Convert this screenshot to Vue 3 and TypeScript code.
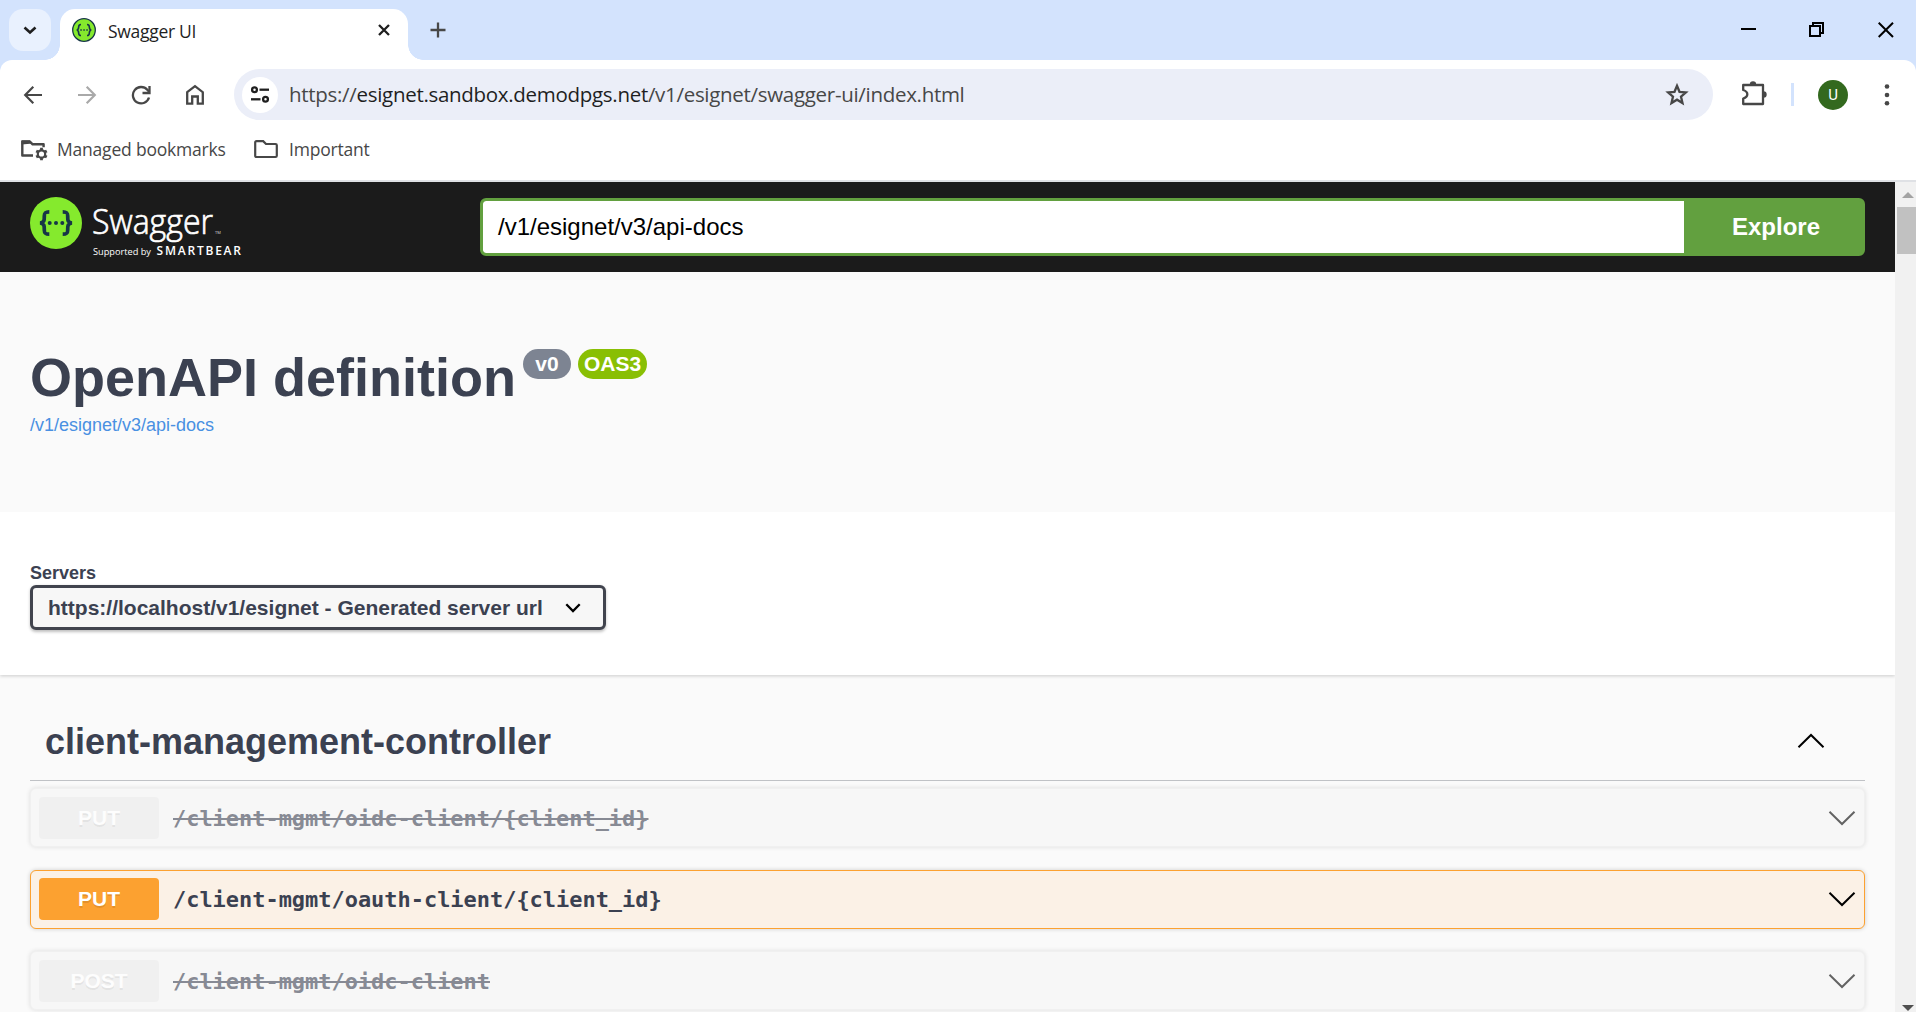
<script setup lang="ts">
interface Operation {
  method: string
  path: string
  deprecated: boolean
}

const operations: Operation[] = [
  { method: 'PUT', path: '/client-mgmt/oidc-client/{client_id}', deprecated: true },
  { method: 'PUT', path: '/client-mgmt/oauth-client/{client_id}', deprecated: false },
  { method: 'POST', path: '/client-mgmt/oidc-client', deprecated: true },
]
</script>

<template>
  <div class="window">
    <header class="tabstrip">
      <div class="tab-search">
        <svg width="42" height="42" viewBox="0 0 42 42"><path d="M15.500 18.500l5.500 5 5.500-5" fill="none" stroke="#1f1f1f" stroke-width="2.600" /></svg>
      </div>
      <div class="tab">
        <svg class="favicon" width="24" height="24" viewBox="0 0 24 24">
          <circle cx="12" cy="12" r="11.300" fill="#85ea2d" stroke="#173647" stroke-width="1.300" />
          <g fill="none" stroke="#173647" stroke-width="1.600">
            <path d="M9 6.500c-2 0-2.300.6-2.300 2.300 0 2-.2 2.800-1.900 3.200 1.700.4 1.900 1.200 1.900 3.200 0 1.700.3 2.300 2.300 2.300" />
            <path d="M15 6.500c2 0 2.300.6 2.300 2.300 0 2 .2 2.800 1.900 3.200-1.700.4-1.900 1.200-1.900 3.200 0 1.700-.3 2.300-2.300 2.300" />
          </g>
          <path d="M8.300 12h1.500M11.300 12h1.500M14.300 12h1.500" stroke="#173647" stroke-width="1.500" />
        </svg>
        <span class="tab-title">Swagger UI</span>
        <svg class="tab-close" width="12" height="12" viewBox="0 0 12 12"><path d="M1 1l10 10M11 1L1 11" stroke="#1f1f1f" stroke-width="2.300" /></svg>
      </div>
      <svg class="new-tab" width="16" height="16" viewBox="0 0 16 16"><path d="M8 .5v15M.5 8h15" stroke="#474747" stroke-width="2.300" /></svg>
      <div class="window-controls">
        <svg width="16" height="16" viewBox="0 0 16 16"><path d="M0 7h15" stroke="#000" stroke-width="2" /></svg>
        <svg width="16" height="16" viewBox="0 0 16 16" fill="none" stroke="#000" stroke-width="2"><path d="M1 4h10v10H1z" /><path d="M4 4V1h10v10h-3" /></svg>
        <svg width="16" height="16" viewBox="0 0 16 16"><path d="M.7.7l14.300 14.300M15 .7L.7 15" stroke="#000" stroke-width="2" /></svg>
      </div>
    </header>

    <div class="toolbar">
      <svg class="nav-icon" width="20" height="20" viewBox="0 0 20 20" fill="none" stroke="#474747" stroke-width="2.200"><path d="M19 10H2.500M10.300 1.800L2.200 10l8.100 8.200" /></svg>
      <svg class="nav-icon" width="20" height="20" viewBox="0 0 20 20" fill="none" stroke="#a9a9a9" stroke-width="2.200"><path d="M1 10h16.500M9.700 1.800l8.100 8.200-8.100 8.200" /></svg>
      <svg class="nav-icon" width="20" height="20" viewBox="0 0 20 20" fill="none" stroke="#474747" stroke-width="2.300"><path d="M18 12.500A8.200 8.200 0 1 1 16.300 4.800L18.300 7" /><path d="M18.500 1v7h-7" /></svg>
      <svg class="nav-icon" width="20" height="22" viewBox="0 0 20 22" fill="none" stroke="#474747" stroke-width="2.300"><path d="M2.200 8.200L10 2.200l7.800 6v11.500h-5v-7.200H7.200v7.200h-5z" /></svg>
      <div class="omnibox">
        <span class="site-info">
          <svg width="18" height="18" viewBox="0 0 18 18" fill="none" stroke="#1f1f1f" stroke-width="2.300"><circle cx="3.500" cy="3.700" r="2.400" /><path d="M8.500 3.700H18" /><circle cx="14.500" cy="13.300" r="2.400" /><path d="M0 13.300h9.500" /></svg>
        </span>
        <span class="url">https://<b>esignet.sandbox.demodpgs.net</b>/v1/esignet/swagger-ui/index.html</span>
        <svg class="star" width="24" height="23" viewBox="0 0 24 23"><path d="M12 2.800l2.500 6 6.400.6-4.900 4.200 1.500 6.400L12 16.700 6.500 20 8 13.600 3.100 9.400l6.400-.6z" fill="none" stroke="#474747" stroke-width="2.300" /></svg>
      </div>
      <svg class="puzzle" width="25" height="25" viewBox="0 0 25 25"><path d="M2.500 4h18.500v19H1.200v-5.500c5.500-1.800 5.500-6.700 0-8.500V4z" fill="none" stroke="#474747" stroke-width="2.300" stroke-linejoin="round" /><path d="M7.800 3.500a3.200 3.200 0 0 1 6.400 0zM21.500 10.300a3.200 3.200 0 0 1 0 6.400z" fill="#474747" /></svg>
      <span class="divider"></span>
      <span class="avatar">U</span>
      <svg class="kebab" width="6" height="24" viewBox="0 0 6 24" fill="#474747"><circle cx="3" cy="3.500" r="2.300" /><circle cx="3" cy="12" r="2.300" /><circle cx="3" cy="20.300" r="2.300" /></svg>
    </div>

    <div class="bookmarks">
      <svg width="28" height="24" viewBox="0 0 28 24">
        <path d="M13 18.500H2.300V4.500h7.500l2.800 2.800h11v3" fill="none" stroke="#474747" stroke-width="2.400" stroke-linejoin="round" />
        <path d="M1.500 7.500V3.500h8.500l3 3z" fill="#474747" />
        <circle cx="21.500" cy="17" r="3.700" fill="none" stroke="#474747" stroke-width="2.200" />
        <path d="M21.500 10.800v2.500M21.500 20.700v2.500M16.200 13.900l2.200 1.200M24.600 18.900l2.200 1.200M16.200 20.100l2.200-1.200M24.600 15.100l2.200-1.200" stroke="#474747" stroke-width="2.800" />
      </svg>
      <span class="bm-managed">Managed bookmarks</span>
      <svg class="bm-folder" width="24" height="20" viewBox="0 0 24 20"><path d="M2.500 2.200h6.700l2.800 2.800h9.500q1.300 0 1.300 1.300v10.400q0 1.300-1.300 1.300h-19q-1.300 0-1.300-1.300V3.500q0-1.300 1.300-1.300z" fill="none" stroke="#474747" stroke-width="2.200" /></svg>
      <span class="bm-important">Important</span>
    </div>

    <div class="viewport">
      <main class="page">
        <div class="topbar">
          <svg class="logo" width="215" height="62" viewBox="0 0 215 62">
            <circle cx="26" cy="26" r="26" fill="#85ea2d" />
            <g fill="none" stroke="#173647" stroke-width="3.700">
              <path d="M19.300 14.800c-4.300 0-5 1-5 4.200 0 4.200.2 6-4 7 4.200 1 4 2.800 4 7 0 3.200.7 4.200 5 4.200" />
              <path d="M32.700 14.800c4.300 0 5 1 5 4.200 0 4.200-.2 6 4 7-4.200 1-4 2.800-4 7 0 3.200-.7 4.200-5 4.200" />
            </g>
            <g fill="#173647"><circle cx="19.700" cy="26" r="2" /><circle cx="26" cy="26" r="2" /><circle cx="32.300" cy="26" r="2" /></g>
            <text class="logo-name" x="62" y="36.500" textLength="121" lengthAdjust="spacingAndGlyphs">Swagger</text>
            <text class="logo-tm" x="185" y="36.500">TM</text>
            <text class="logo-by" x="63" y="58" textLength="58" lengthAdjust="spacingAndGlyphs">Supported by</text>
            <text class="logo-bear" x="126.500" y="57.500" textLength="84.500">SMARTBEAR</text>
          </svg>
          <div class="download">
            <div class="spec-url">/v1/esignet/v3/api-docs</div>
            <div class="explore">Explore</div>
          </div>
        </div>

        <section class="info">
          <div class="title-row">
            <h1>OpenAPI definition</h1>
            <span class="badge">v0</span>
            <span class="badge oas">OAS3</span>
          </div>
          <a class="spec-link">/v1/esignet/v3/api-docs</a>
        </section>

        <section class="servers">
          <label>Servers</label>
          <div class="select">
            <span>https://localhost/v1/esignet - Generated server url</span>
            <svg width="16" height="10" viewBox="0 0 16 10"><path d="M1.300 1.200L8 8l6.700-6.800" fill="none" stroke="#000" stroke-width="2.300" /></svg>
          </div>
        </section>

        <section class="operations">
          <div class="tag">
            <h3>client-management-controller</h3>
            <svg width="28" height="16" viewBox="0 0 28 16"><path d="M1.500 14.300L14 2l12.500 12.300" fill="none" stroke="#000" stroke-width="2" /></svg>
          </div>
          <div v-for="op in operations" :key="op.method + op.path" class="opblock" :class="{ deprecated: op.deprecated }">
            <span class="method">{{ op.method }}</span>
            <span class="path">{{ op.path }}</span>
            <svg width="28" height="16" viewBox="0 0 28 16"><path d="M1.500 1.700L14 14 26.500 1.700" fill="none" stroke="#000" stroke-width="2" /></svg>
          </div>
        </section>
      </main>
      <aside class="scrollbar">
        <svg width="12" height="6" viewBox="0 0 12 6"><path d="M0 6L6 0l6 6z" fill="#a3a3a3" /></svg>
        <div class="thumb"></div>
        <svg class="down" width="12" height="6" viewBox="0 0 12 6"><path d="M0 0l6 6 6-6z" fill="#505050" /></svg>
      </aside>
    </div>
  </div>
</template>

<style>
body {
  margin: 0;
  overflow: hidden;
}
</style>

<style scoped>
* {
  box-sizing: border-box;
}
svg {
  display: block;
  flex: none;
}
.window {
  width: 1916px;
  height: 1012px;
  display: flex;
  flex-direction: column;
  overflow: hidden;
  background: #d3e3fd;
  font-family: "Open Sans", "Noto Sans", sans-serif;
}
.tabstrip {
  height: 60px;
  flex: none;
  display: flex;
  align-items: flex-start;
  padding-left: 9px;
}
.tab-search {
  width: 42px;
  height: 42px;
  margin-top: 9px;
  border-radius: 14px;
  background: #e9f1fe;
}
.tab {
  position: relative;
  width: 348px;
  height: 51px;
  margin: 9px 0 0 9px;
  padding: 0 18px 0 12px;
  display: flex;
  border-radius: 15px 15px 0 0;
  background: #fff;
}
.tab::before,
.tab::after {
  content: "";
  position: absolute;
  bottom: 0;
  width: 15px;
  height: 15px;
}
.tab::before {
  right: 100%;
  background: radial-gradient(circle at 0 0, transparent 14.500px, #fff 15px);
}
.tab::after {
  left: 100%;
  background: radial-gradient(circle at 100% 0, transparent 14.500px, #fff 15px);
}
.favicon {
  margin-top: 9px;
}
.tab-title {
  margin: 9px 0 0 12px;
  font-size: 17.500px;
  line-height: 27px;
  color: #1f1f1f;
  letter-spacing: -0.3px;
}
.tab-close {
  margin: 15px 0 0 auto;
}
.new-tab {
  margin: 22px 0 0 22px;
}
.window-controls {
  display: flex;
  gap: 52.500px;
  margin: 22px 22px 0 auto;
}
.window-controls svg:nth-child(2) {
  margin: 0 1px 0 -1px;
}
.toolbar {
  height: 69px;
  flex: none;
  display: flex;
  align-items: center;
  padding: 0 26px 0 23px;
  border-radius: 12px 12px 0 0;
  background: #fff;
}
.nav-icon {
  margin-right: 34px;
}
.nav-icon + .nav-icon:nth-child(4) {
  margin-right: 29px;
}
.omnibox {
  width: 1479px;
  height: 51px;
  display: flex;
  align-items: center;
  padding: 0 24px 0 8px;
  border-radius: 26px;
  background: #ebeef8;
}
.site-info {
  width: 36px;
  height: 36px;
  display: flex;
  align-items: center;
  justify-content: center;
  border-radius: 50%;
  background: #fff;
}
.url {
  margin: -2px 0 0 11px;
  font-size: 20.500px;
  color: #474747;
  letter-spacing: -0.3px;
}
.url b {
  font-weight: inherit;
  color: #1f1f1f;
}
.star {
  margin-left: auto;
}
.puzzle {
  margin: -3px 0 0 29px;
}
.divider {
  width: 3px;
  height: 23px;
  margin-left: 24px;
  background: #d3e3fd;
}
.avatar {
  width: 30px;
  height: 30px;
  margin-left: 24px;
  border-radius: 50%;
  background: #33691e;
  color: #fff;
  font: 15px/30px Roboto, sans-serif;
  text-align: center;
}
.kebab {
  margin-left: auto;
}
.bookmarks {
  height: 53px;
  flex: none;
  display: flex;
  align-items: center;
  padding: 0 0 11px 20px;
  border-bottom: 2px solid #dfe1e5;
  background: #fff;
  font-size: 17.500px;
  color: #474747;
  letter-spacing: -0.2px;
}
.bm-managed {
  width: 168px;
  margin-left: 9px;
  white-space: nowrap;
}
.bm-folder {
  margin-left: 29px;
}
.bm-important {
  margin-left: 11px;
}
.viewport {
  flex: 1;
  display: flex;
  min-height: 0;
}
.page {
  width: 1895px;
  overflow: hidden;
  background: #fafafa;
  color: #3b4151;
  font-family: "Liberation Sans", Arial, sans-serif;
}
.topbar {
  height: 90px;
  display: flex;
  padding: 15px 30px 0;
  background: #1b1b1b;
}
.logo-name,
.logo-by {
  font-family: "Open Sans", sans-serif;
  fill: #fff;
}
.logo-name {
  font-size: 34px;
  font-weight: 300;
  stroke: #fff;
  stroke-width: 0.7px;
}
.logo-tm {
  font: 4px "Open Sans", sans-serif;
  fill: #ddd;
}
.logo-by {
  font-size: 9.500px;
}
.logo-bear {
  font: 600 12px "Open Sans", sans-serif;
  fill: #fff;
}
.download {
  width: 1385px;
  height: 58px;
  margin: 1px 0 0 auto;
  display: flex;
  border: 3px solid #62a03f;
  border-radius: 6px;
  background: #62a03f;
  overflow: hidden;
}
.spec-url {
  width: 1201px;
  padding-left: 15px;
  border-radius: 3px 0 0 3px;
  background: #fff;
  color: #000;
  font-size: 24px;
  line-height: 52px;
}
.explore {
  flex: 1;
  padding-left: 6px;
  color: #fff;
  font-size: 24px;
  font-weight: 700;
  line-height: 51px;
  text-align: center;
}
.info {
  height: 240px;
  padding: 74px 30px 0;
}
.title-row {
  display: flex;
  align-items: flex-start;
}
h1 {
  margin: 0;
  font-size: 54px;
  line-height: 62px;
}
.badge {
  width: 48px;
  height: 30px;
  margin: 3px 0 0 7px;
  border-radius: 15px;
  background: #7d8492;
  color: #fff;
  font-size: 21px;
  font-weight: 700;
  line-height: 30px;
  text-align: center;
}
.badge.oas {
  width: 69px;
  background: #89bf04;
}
.spec-link {
  display: block;
  margin-top: 7px;
  font-size: 18px;
  line-height: 21px;
  color: #4990e2;
}
.servers {
  height: 163px;
  padding: 49px 30px 0;
  background: #fff;
  box-shadow: 0 1.500px 3px rgba(0, 0, 0, 0.15);
}
label {
  display: block;
  font-size: 18px;
  font-weight: 700;
  line-height: 24px;
}
.select {
  width: 576px;
  height: 45px;
  display: flex;
  align-items: center;
  justify-content: space-between;
  padding: 0 22px 0 15px;
  border: 3px solid #41444e;
  border-radius: 6px;
  background: #f7f7f7;
  box-shadow: 0 1.500px 3px rgba(0, 0, 0, 0.25);
  font-size: 21px;
  font-weight: 700;
}
.operations {
  padding: 30px 30px 0;
}
.tag {
  height: 76px;
  margin-bottom: 7px;
  display: flex;
  align-items: center;
  justify-content: space-between;
  padding: 0 40px 2px 15px;
  border-bottom: 1px solid rgba(59, 65, 81, 0.3);
}
.tag svg {
  margin-top: -2px;
}
h3 {
  margin: 0;
  font-size: 36px;
  line-height: 42px;
}
.opblock {
  height: 59px;
  margin-bottom: 22.500px;
  display: flex;
  align-items: center;
  padding: 0 8px;
  border: 1px solid #fca130;
  border-radius: 6px;
  background: #fbf1e6;
  box-shadow: 0 0 4.500px rgba(0, 0, 0, 0.19);
}
.opblock.deprecated {
  padding-top: 1px;
  border-color: #ebebeb;
  background: #f6f6f6;
  opacity: 0.6;
}
.method {
  width: 120px;
  height: 42px;
  margin-top: -1px;
  border-radius: 4px;
  background: #fca130;
  color: #fff;
  font-size: 21px;
  font-weight: 700;
  line-height: 41px;
  text-align: center;
  text-shadow: 0 1.500px 0 rgba(0, 0, 0, 0.1);
}
.deprecated .method {
  background: #ebebeb;
}
.path {
  flex: 1;
  padding-left: 14px;
  font: 700 21.950px "DejaVu Sans Mono", monospace;
}
.deprecated .path {
  text-decoration: line-through;
}
.scrollbar {
  width: 21px;
  display: flex;
  flex-direction: column;
  align-items: flex-end;
  padding: 10px 0 1px;
  background: #f1f1f1;
}
.scrollbar svg {
  margin-right: 2px;
}
.thumb {
  width: 19px;
  height: 47px;
  margin-top: 9px;
  background: #c1c1c1;
}
.down {
  margin-top: auto;
}
</style>
